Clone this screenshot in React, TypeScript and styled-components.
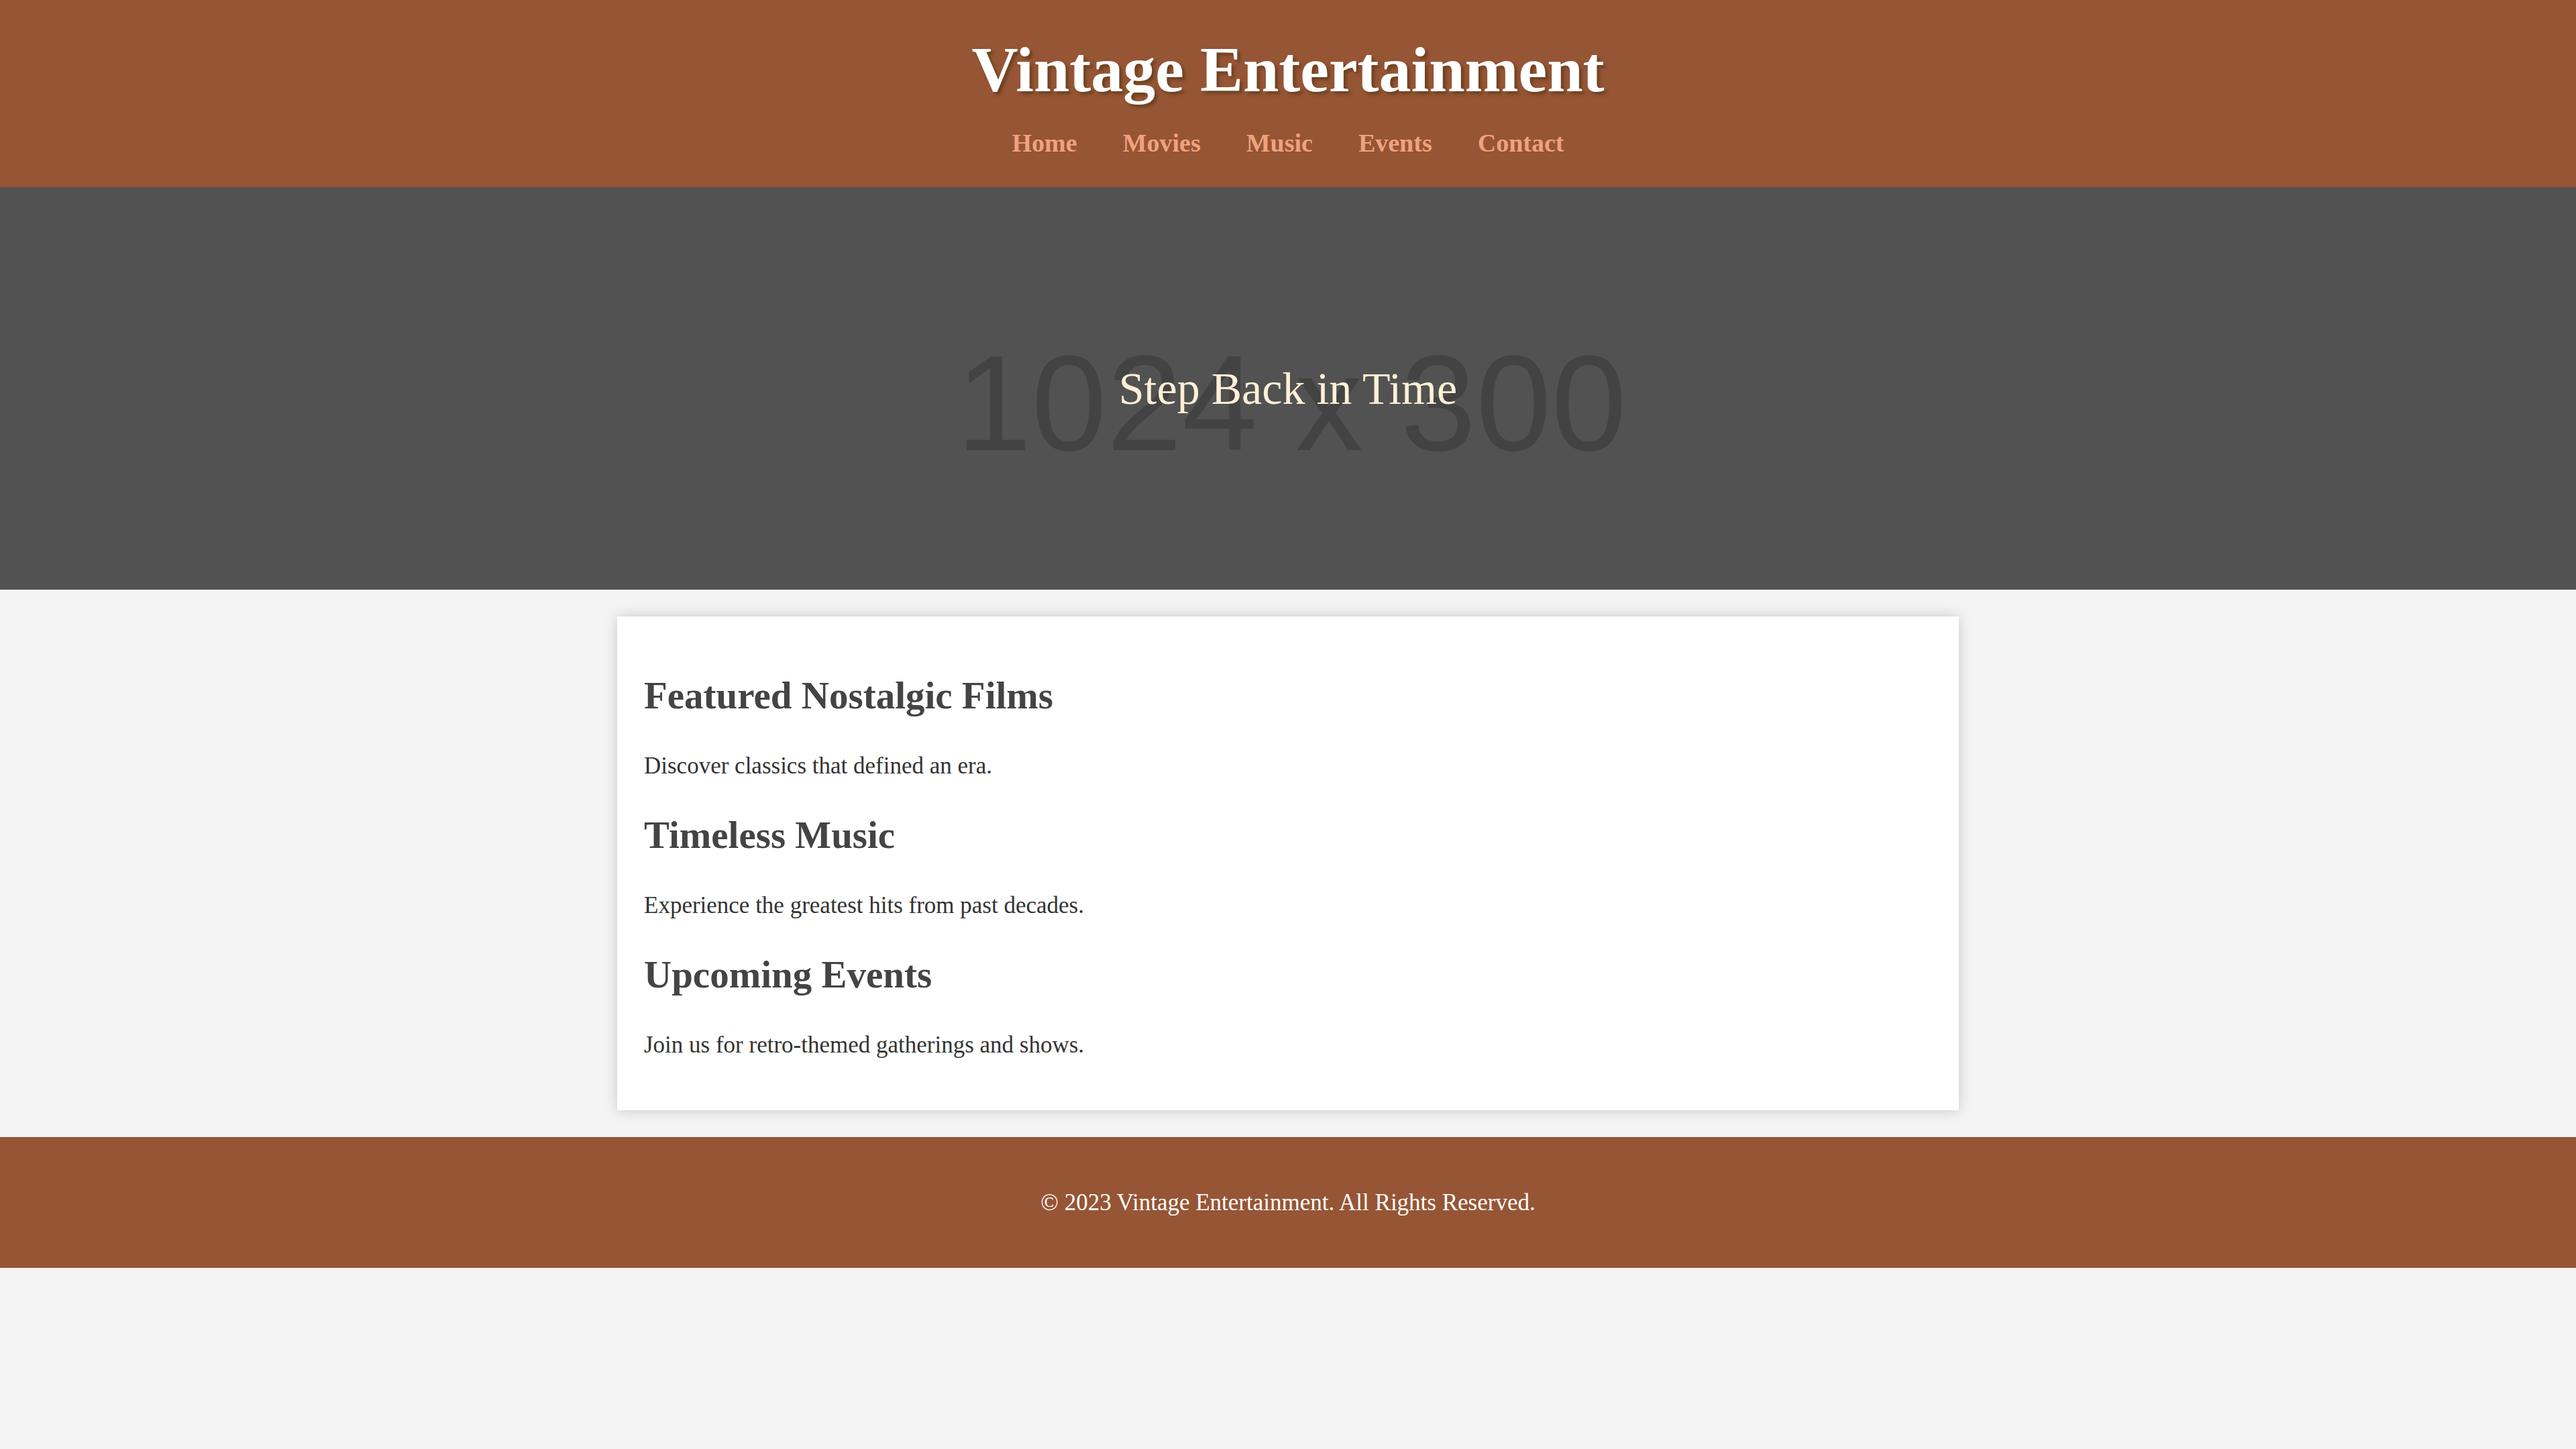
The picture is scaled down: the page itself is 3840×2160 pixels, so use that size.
import React from "react";
import styled, { createGlobalStyle } from "styled-components";

const GlobalStyle = createGlobalStyle`
  html, body {
    margin: 0;
    padding: 0;
    background: #f4f4f4;
  }
  body {
    font-family: "Liberation Serif", "Times New Roman", serif;
    color: #333;
    line-height: 1.6;
  }
  * { box-sizing: border-box; }
`;

const Header = styled.header`
  background: #965535;
  padding: 40px;
  text-align: center;
`;

const Title = styled.h1`
  margin: 0;
  font-size: 96px;
  line-height: 128px;
  font-weight: 700;
  color: #ffffff;
  text-shadow: 4px 4px 4px rgba(70, 50, 15, 0.55);
`;

const Nav = styled.nav`
  margin-top: 20px;
  display: flex;
  justify-content: center;
  gap: 68px;
`;

const NavLink = styled.a`
  font-size: 38px;
  line-height: 51.2px;
  font-weight: 700;
  color: #f0a17e;
  text-decoration: none;
  cursor: pointer;
`;

const Hero = styled.section`
  position: relative;
  height: 600px;
  background: #525252;
  overflow: hidden;
  display: flex;
  align-items: center;
  justify-content: center;
`;

const Placeholder = styled.span`
  position: absolute;
  left: 50%;
  top: 50%;
  transform: translate(-50%, -50%);
  margin-top: 22px;
  margin-left: 5px;
  font-family: "Liberation Sans", Arial, sans-serif;
  font-size: 202px;
  line-height: 1;
  color: #434343;
  white-space: nowrap;
  user-select: none;
`;

const HeroTitle = styled.h2`
  position: relative;
  margin: 0;
  font-size: 68px;
  line-height: 102.4px;
  font-weight: 400;
  color: #fff0d6;
`;

const Card = styled.main`
  width: 2000px;
  margin: 40px auto;
  padding: 40px;
  background: #ffffff;
  box-shadow: 0 0 20px rgba(0, 0, 0, 0.18);
`;

const Section = styled.section``;

const SectionTitle = styled.h2`
  margin: 40px 0;
  font-size: 57px;
  line-height: 76.8px;
  font-weight: 700;
  color: #444;
`;

const Text = styled.p`
  margin: 32px 0;
  font-size: 35px;
  line-height: 51.2px;
  color: #333;
`;

const Footer = styled.footer`
  background: #965535;
  padding: 40px;
  text-align: center;
`;

const FooterText = styled.p`
  margin: 32px 0;
  font-size: 35px;
  line-height: 51.2px;
  color: #ffffff;
`;

const links = ["Home", "Movies", "Music", "Events", "Contact"];

const sections = [
  { title: "Featured Nostalgic Films", text: "Discover classics that defined an era." },
  { title: "Timeless Music", text: "Experience the greatest hits from past decades." },
  { title: "Upcoming Events", text: "Join us for retro-themed gatherings and shows." },
];

export default function App() {
  return (
    <>
      <GlobalStyle />
      <Header>
        <Title>Vintage Entertainment</Title>
        <Nav>
          {links.map((l) => (
            <NavLink key={l} href="#">
              {l}
            </NavLink>
          ))}
        </Nav>
      </Header>
      <Hero>
        <Placeholder aria-hidden="true">1024 x 300</Placeholder>
        <HeroTitle>Step Back in Time</HeroTitle>
      </Hero>
      <Card>
        {sections.map((s) => (
          <Section key={s.title}>
            <SectionTitle>{s.title}</SectionTitle>
            <Text>{s.text}</Text>
          </Section>
        ))}
      </Card>
      <Footer>
        <FooterText>© 2023 Vintage Entertainment. All Rights Reserved.</FooterText>
      </Footer>
    </>
  );
}
